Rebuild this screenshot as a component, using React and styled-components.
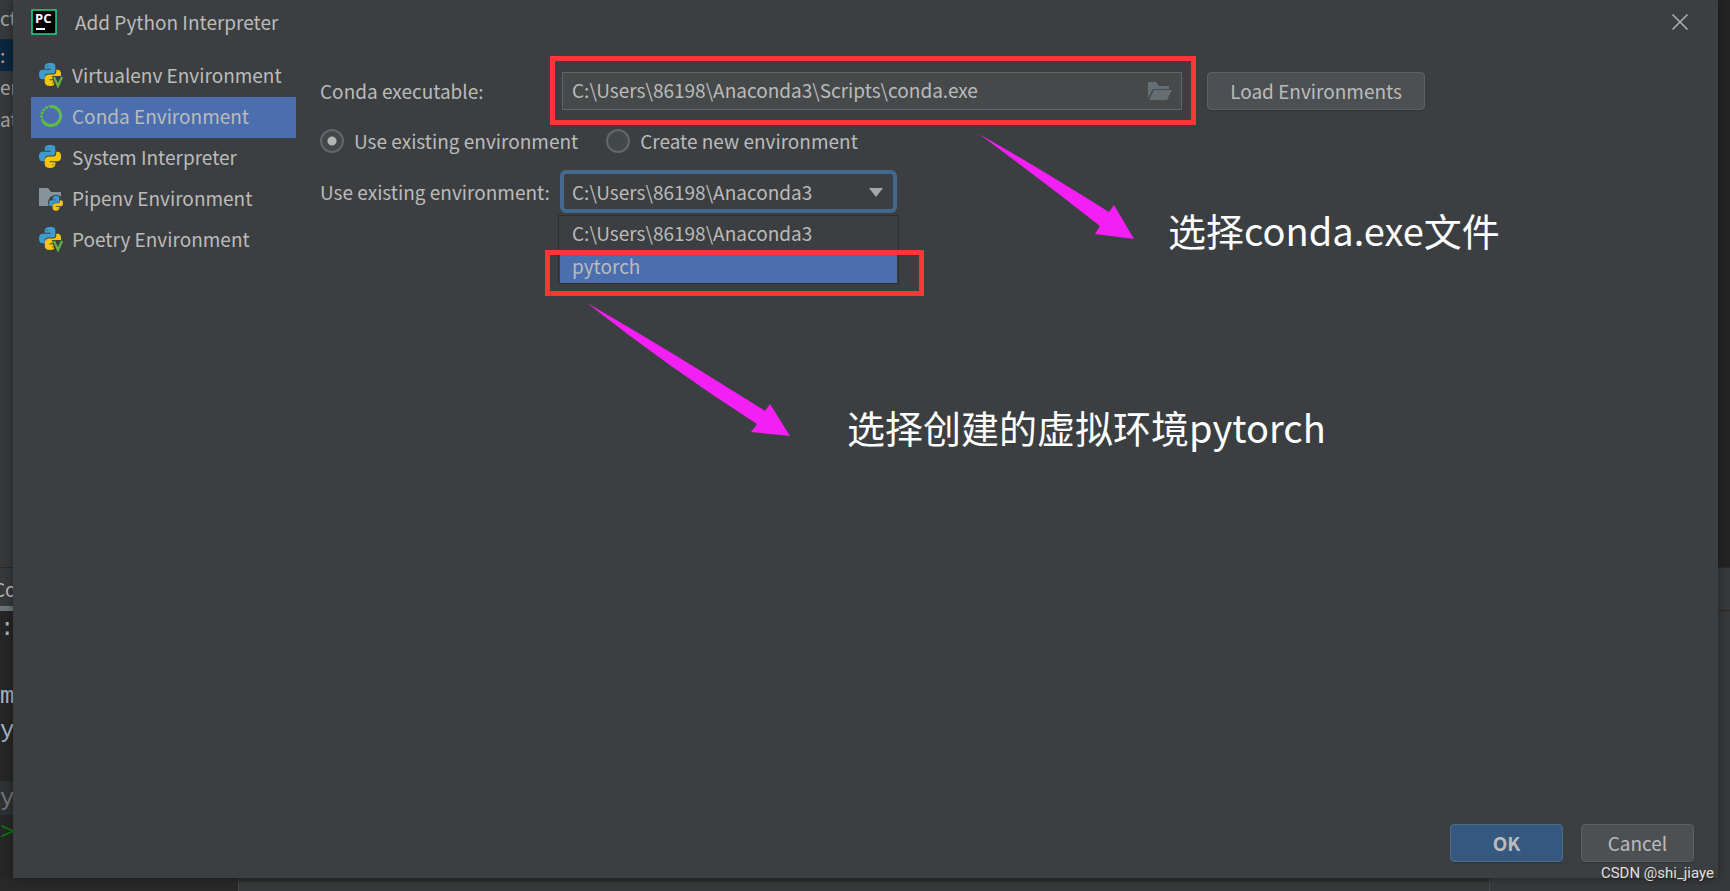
import React, { useState } from "react";
import styled, { createGlobalStyle } from "styled-components";

const GlobalStyle = createGlobalStyle`
  * { box-sizing: border-box; }
  html, body { margin: 0; background: #2b2b2b; }
  body, button, input, select {
    font-family: "Noto Sans CJK SC", "Noto Sans", sans-serif;
    font-size: 19px;
    line-height: 24px;
    color: #bbbbbb;
  }
`;

/* The dialog and the IDE behind it share one grid cell. */
const Screen = styled.div`
  display: grid;
  grid-template: minmax(100vh, auto) / minmax(0, 1fr);
  overflow: hidden;
`;

const Ide = styled.div`
  grid-area: 1 / 1;
  display: flex;
  flex-direction: column;
  background: #292929;
  overflow: hidden;
`;

const Workspace = styled.div`
  display: flex;
  flex: 1;
  min-height: 0;
`;

const ProjectTree = styled.div`
  width: 238px;
  background: #37393b;
`;

const TreeHeader = styled.div`
  height: 39px;
  line-height: 36px;
  color: #a4a6a8;
`;

const TreeRow = styled.div`
  height: 32px;
  line-height: 32px;
  color: ${(p) => (p.$selected ? "#d0a070" : "#a4a6a8")};
  background: ${(p) => (p.$selected ? "#0b2840" : "transparent")};
`;

const Editor = styled.div`
  flex: 1;
  background: #242424;
`;

const ToolTab = styled.div`
  height: 44px;
  padding-top: 9px;
  border-top: 1px solid #2b2b2b;
  border-bottom: 1px solid #2b2b2b;
  background: #37393b;
`;

const TabLabel = styled.div`
  width: 80px;
  height: 34px;
  border-bottom: 5px solid #6e7478;
  text-indent: -7px;
`;

const Console = styled.div`
  display: flex;
  height: 267px;
`;

const ConsoleText = styled.div`
  width: 238px;
  font-family: "Liberation Mono", monospace;
  font-size: 24px;
  background: #262626;
`;

const ConsoleLine = styled.div`
  height: 34px;
  line-height: 36px;
  color: ${(p) => p.$color || "#a9b7c6"};
  background: ${(p) => (p.$active ? "#303132" : "transparent")};
`;

const ConsoleSide = styled.div`
  flex: 1;
  border-left: 1px solid #454749;
  background: #37393b;
`;

const StatusBar = styled.div`
  display: flex;
  height: 13px;
  padding-left: 238px;
  background: #292929;
`;

const StatusPanel = styled.div`
  flex: 1;
  margin-right: 240px;
  border-top: 4px solid #2c2e2f;
  border-left: 1px solid #454749;
  border-right: 1px solid #454749;
  background: #38393b;
  box-shadow: 240px 0 0 #37393a;
`;

const Dialog = styled.main`
  grid-area: 1 / 1;
  position: relative;
  display: flex;
  flex-direction: column;
  margin: 0 12px 13px 13px;
  background: #3c3f41;
  box-shadow: 0 0 10px rgba(0, 0, 0, 0.4);
`;

const TitleBar = styled.header`
  display: flex;
  align-items: center;
  height: 46px;
  padding: 0 30px 2px 18px;
`;

const Title = styled.h1`
  flex: 1;
  margin: 0 0 0 18px;
  font-size: 19px;
  font-weight: 400;
  line-height: 24px;
`;

const CloseButton = styled.button`
  display: flex;
  padding: 0;
  border: 0;
  background: none;
`;

const Body = styled.div`
  display: flex;
  flex: 1;
  padding: 10px 18px 0;
`;

const Sidebar = styled.nav`
  width: 265px;
  margin-right: 24px;
`;

const EnvLink = styled.a`
  display: flex;
  align-items: center;
  height: 41px;
  padding: 0 0 4px 7px;
  gap: 8px;
  color: #bbbbbb;
  text-decoration: none;
  background: ${(p) => (p.$active ? "#4b6eaf" : "transparent")};
`;

const Form = styled.form`
  position: relative;
  flex: 1;
`;

const FieldRow = styled.div`
  display: flex;
  align-items: center;
`;

const ComboRow = styled(FieldRow)`
  margin-top: 17px;
`;

const FieldLabel = styled.label`
  width: 240px;
  white-space: nowrap;
`;

const Highlight = styled.div`
  border: 5px solid #fb3636;
`;

const PathHighlight = styled(Highlight)`
  width: 646px;
  margin: 0 11px 0 -10px;
  padding: 11px 9px 10px 7px;
`;

const PathBox = styled.div`
  display: flex;
  align-items: center;
  height: 38px;
  padding: 0 9px;
  border: 1px solid #646464;
  background: #45494a;
`;

const PathInput = styled.input`
  flex: 1;
  min-width: 0;
  padding: 0 0 2px;
  border: 0;
  outline: 0;
  background: none;
`;

const Button = styled.button`
  height: 38px;
  width: ${(p) => p.$width};
  padding: 0;
  border: 1px solid ${(p) => (p.$primary ? "#4c708c" : "#5e6060")};
  border-radius: 4px;
  background: ${(p) => (p.$primary ? "#365880" : "#4c5052")};
  font-weight: ${(p) => (p.$primary ? 700 : 400)};
  box-shadow: 0 1px 1px rgba(0, 0, 0, 0.2);
`;

const RadioRow = styled(FieldRow)`
  gap: 28px;
  margin-top: 4px;
`;

const RadioLabel = styled.label`
  display: flex;
  align-items: center;
  gap: 10px;
`;

const Radio = styled.input`
  appearance: none;
  width: 24px;
  height: 24px;
  margin: 0;
  border: 2px solid #646668;
  border-radius: 50%;
  background: #43494a;
  &:checked {
    background: radial-gradient(circle, #b4b6b6 4px, #43494a 5px);
  }
`;

const ComboWrap = styled.div`
  position: relative;
  width: 337px;
`;

const Combo = styled.select`
  display: block;
  appearance: none;
  width: 100%;
  height: 43px;
  padding: 0 8px;
  border: 4px solid #43698f;
  border-radius: 6px;
  outline: 0;
  background: #3c3f41;
`;

const ComboArrow = styled.svg`
  position: absolute;
  top: 18px;
  right: 14px;
  pointer-events: none;
`;

const Popup = styled.ul`
  position: absolute;
  top: 45px;
  left: -2px;
  width: 341px;
  margin: 0;
  padding: 0 1px;
  list-style: none;
  border: 1px solid #2d2f30;
  background: #3c3f41;
`;

const Option = styled.li`
  height: ${(p) => (p.$active ? "33px" : "34px")};
  padding: ${(p) => (p.$active ? "4px" : "5px")} 12px 0;
  background: ${(p) => (p.$active ? "#4b6eaf" : "transparent")};
`;

const OptionHighlight = styled(Highlight)`
  position: absolute;
  top: 80px;
  left: -15px;
  width: 379px;
  height: 46px;
`;

const Note = styled.p`
  position: absolute;
  top: ${(p) => p.$top};
  left: ${(p) => p.$left};
  margin: 0;
  color: #ffffff;
  font-size: 38px;
  line-height: 48px;
  white-space: nowrap;
`;

const Arrow = styled.svg`
  position: absolute;
  top: ${(p) => p.$top};
  left: ${(p) => p.$left};
`;

const Footer = styled.footer`
  display: flex;
  justify-content: flex-end;
  gap: 18px;
  padding: 0 24px 16px;
`;

const Watermark = styled.div`
  position: absolute;
  right: 4px;
  bottom: -5px;
  font: 15px/20px Roboto, sans-serif;
  color: #e0e0e0;
  text-shadow: 1px 1px 1px #222222;
`;

const PythonShapes = () => (
  <>
    <path fill="#3e9bcb" d="M12 0C8 0 6 1 6 4v2h6v1H4C1 7 0 9 0 12s1 5 4 5h2v-2c0-3 2-4 4-4h4c2 0 3-1 3-3V4c0-3-1-4-5-4Z" />
    <path fill="#f5c60c" d="M18 7h1c3 0 4 2 4 5s-1 5-4 5h-8v1h6v2c0 2-2 4-5.500 4S6 22.500 6 20v-4c0-2 2-4 4-4h4c2 0 4-1 4-3Z" />
    <circle cx="9" cy="3.500" r="0.800" fill="#2f6f92" />
    <circle cx="14.500" cy="20.500" r="1" fill="#a98c1c" />
  </>
);

function EnvIcon({ kind }) {
  return (
    <svg width="26" height="26" viewBox="0 0 26 26" aria-hidden="true">
      {kind === "conda" && (
        <g fill="none" stroke="#5fbd3d">
          <path d="M13 3.500A9.500 9.500 0 1 1 5 18" strokeWidth="3" />
          <path d="M5 18A9.500 9.500 0 0 1 13 3.500" strokeDasharray="2.500 1" strokeWidth="2.500" />
        </g>
      )}
      {kind === "pipenv" && (
        <>
          <path fill="#87939a" d="M1 3h9l3 4h10v14H1Z" />
          <circle cx="18" cy="18" r="8" fill="#3c3f41" />
          <g transform="translate(11 11) scale(0.610)"><PythonShapes /></g>
        </>
      )}
      {(kind === "python" || kind === "virtual") && (
        <g transform="translate(1 1) scale(0.960)"><PythonShapes /></g>
      )}
      {kind === "virtual" && (
        <>
          <path fill="#3c3f41" d="M14 14h12v12H17Z" />
          <path fill="none" stroke="#62b543" strokeWidth="2.200" d="m16 15 4 9 4-9" />
        </>
      )}
    </svg>
  );
}

const environments = [
  ["Virtualenv Environment", "virtual"],
  ["Conda Environment", "conda"],
  ["System Interpreter", "python"],
  ["Pipenv Environment", "pipenv"],
  ["Poetry Environment", "virtual"],
];

const consoleLines = [
  [":"], [""], ["m"], ["y"], [""], ["y", "#74797e", true], [">", "#0a7a0a"],
];

export default function App() {
  const [path, setPath] = useState("C:\\Users\\86198\\Anaconda3\\Scripts\\conda.exe");
  const [mode, setMode] = useState("existing");

  return (
    <>
      <GlobalStyle />
      <Screen>
        <Ide aria-hidden="true">
          <Workspace>
            <ProjectTree>
              <TreeHeader>ct</TreeHeader>
              <TreeRow $selected>:</TreeRow>
              <TreeRow>er</TreeRow>
              <TreeRow>at</TreeRow>
            </ProjectTree>
            <Editor />
          </Workspace>
          <ToolTab><TabLabel>Co</TabLabel></ToolTab>
          <Console>
            <ConsoleText>
              {consoleLines.map(([text, color, active], i) => (
                <ConsoleLine key={i} $color={color} $active={active}>{text}</ConsoleLine>
              ))}
            </ConsoleText>
            <ConsoleSide />
          </Console>
          <StatusBar><StatusPanel /></StatusBar>
        </Ide>

        <Dialog>
          <TitleBar>
            <svg width="26" height="26" viewBox="0 0 26 26" aria-hidden="true">
              <rect x="1" y="1" width="24" height="24" fill="#000" stroke="#21d789" strokeWidth="1.500" />
              <text x="4" y="14" fill="#fff" fontFamily="Open Sans" fontSize="13" fontWeight="700">PC</text>
              <rect x="5" y="19" width="9" height="2" fill="#fff" />
            </svg>
            <Title>Add Python Interpreter</Title>
            <CloseButton type="button" aria-label="Close">
              <svg width="16" height="16" viewBox="0 0 16 16" stroke="#b0b2b3" strokeWidth="1.500">
                <path d="m0.500 0.500 15 15M15.500 0.500l-15 15" />
              </svg>
            </CloseButton>
          </TitleBar>

          <Body>
            <Sidebar>
              {environments.map(([name, kind]) => (
                <EnvLink key={name} href="#" $active={kind === "conda"}>
                  <EnvIcon kind={kind} />
                  {name}
                </EnvLink>
              ))}
            </Sidebar>

            <Form>
              <FieldRow>
                <FieldLabel htmlFor="conda">Conda executable:</FieldLabel>
                <PathHighlight>
                  <PathBox>
                    <PathInput id="conda" value={path} onChange={(e) => setPath(e.target.value)} />
                    <svg width="24" height="18" viewBox="0 0 24 18" fill="#646e73" aria-hidden="true">
                      <path d="M0 0h8l3 4h10v3H5L0 16ZM6 8h18l-5 10H1Z" />
                    </svg>
                  </PathBox>
                </PathHighlight>
                <Button type="button" $width="218px">Load Environments</Button>
              </FieldRow>
              <RadioRow>
                <RadioLabel>
                  <Radio type="radio" name="mode" checked={mode === "existing"} onChange={() => setMode("existing")} />
                  Use existing environment
                </RadioLabel>
                <RadioLabel>
                  <Radio type="radio" name="mode" checked={mode === "new"} onChange={() => setMode("new")} />
                  Create new environment
                </RadioLabel>
              </RadioRow>
              <ComboRow>
                <FieldLabel htmlFor="env">Use existing environment:</FieldLabel>
                <ComboWrap>
                  <Combo id="env" defaultValue="base">
                    <option value="base">C:\Users\86198\Anaconda3</option>
                    <option value="pytorch">pytorch</option>
                  </Combo>
                  <ComboArrow width="14" height="9" viewBox="0 0 14 9" aria-hidden="true">
                    <path d="M0 0h14L7 9Z" fill="#a5a8aa" />
                  </ComboArrow>
                  <Popup role="listbox" aria-label="Environments">
                    <Option role="option">C:\Users\86198\Anaconda3</Option>
                    <Option role="option" $active>pytorch</Option>
                  </Popup>
                  <OptionHighlight />
                </ComboWrap>
              </ComboRow>

              <Arrow $top="78px" $left="659px" width="156" height="106" viewBox="0 0 156 106">
                <path fill="#f41ff4" d="M0 0Q50 28 130 78L135 71L155 105L116 100L121 92Q60 44 0 0Z" />
              </Arrow>
              <Note $top="150px" $left="848px">选择conda.exe文件</Note>
              <Arrow $top="247px" $left="267px" width="204" height="134" viewBox="0 0 204 134">
                <path fill="#f41ff4" d="M0 0Q80 46 178 108L183 101L203 133L164 129L170 121Q84 66 0 0Z" />
              </Arrow>
              <Note $top="347px" $left="527px">选择创建的虚拟环境pytorch</Note>
            </Form>
          </Body>

          <Footer>
            <Button type="button" $width="113px" $primary>OK</Button>
            <Button type="button" $width="113px">Cancel</Button>
          </Footer>
          <Watermark>CSDN @shi_jiaye</Watermark>
        </Dialog>
      </Screen>
    </>
  );
}
